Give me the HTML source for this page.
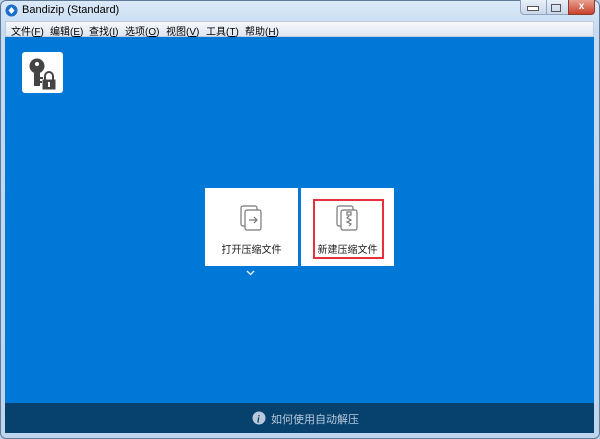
<!DOCTYPE html><html><head><style>
body{margin:0;width:600px;height:439px;background:#bcd4ee;font-family:"Liberation Sans","Noto Sans CJK SC",sans-serif;position:relative;overflow:hidden}
.frame{position:absolute;left:0;top:0;width:598px;height:437px;border:1px solid #5f7a96;border-radius:6px;background:linear-gradient(#dbe9f8,#c6dbf2 30px,#bfd5ee)}
.title{position:absolute;left:22px;top:4px;font-size:11px;color:#000}
.menu{position:absolute;left:5px;top:21px;width:589px;height:16px;background:linear-gradient(#f6f8fc,#dfe6f1);font-size:10px;border:1px solid #c0cbdb;box-sizing:border-box}
.menu span{position:absolute;top:1px}
.main{position:absolute;left:5px;top:37px;width:589px;height:366px;background:#0078d7}
.foot{position:absolute;left:5px;top:403px;width:589px;height:30px;background:#07426f;color:#b9c9db;font-size:11px}
.card{position:absolute;top:188px;width:93px;height:78px;background:#fff;font-size:10px;color:#222;text-align:center}
</style></head><body>
<div class="frame"></div>
<svg style="position:absolute;left:5px;top:4px" width="13" height="13"><circle cx="6.5" cy="6.5" r="6" fill="#1a6fc9"/><path d="M6.5 3 L9.5 6.5 L6.5 10 L3.5 6.5Z" fill="#fff"/></svg>
<div class="title">Bandizip (Standard)</div>
<div style="position:absolute;left:520px;top:0;width:25px;height:14px;border:1px solid #8fa3bb;border-top:0;border-radius:0 0 0 4px;background:linear-gradient(#e8f0fa,#c8d7ea)"></div>
<div style="position:absolute;left:546px;top:0;width:21px;height:14px;border:1px solid #8fa3bb;border-top:0;background:linear-gradient(#e8f0fa,#c8d7ea)"></div>
<div style="position:absolute;left:568px;top:0;width:25px;height:14px;border:1px solid #8a3a2e;border-top:0;border-radius:0 0 4px 0;background:linear-gradient(#e8a08e,#c8422e);color:#fff;font-size:10px;text-align:center;line-height:13px;font-weight:bold">x</div>
<div style="position:absolute;left:527px;top:6px;width:10px;height:3px;border:1px solid #555;background:#fff"></div>
<div style="position:absolute;left:551px;top:4px;width:8px;height:6px;border:1px solid #555"></div>
<div class="menu"><span style="left:5px">文件(<u>F</u>)</span><span style="left:44px">编辑(<u>E</u>)</span><span style="left:83px">查找(<u>I</u>)</span><span style="left:119px">选项(<u>O</u>)</span><span style="left:160px">视图(<u>V</u>)</span><span style="left:200px">工具(<u>T</u>)</span><span style="left:239px">帮助(<u>H</u>)</span></div>
<div class="main"></div>
<div style="position:absolute;left:22px;top:52px;width:41px;height:41px;background:#fff;border-radius:3px"></div>
<svg style="position:absolute;left:22px;top:52px" width="41" height="41"><circle cx="15" cy="14" r="7.5" fill="#444"/><circle cx="15" cy="12" r="2" fill="#fff"/><rect x="12" y="19" width="6" height="15" fill="#444"/><rect x="18" y="25" width="3" height="2" fill="#444"/><rect x="18" y="29" width="2" height="2" fill="#444"/><path d="M23 28v-4a4 4 0 0 1 8 0v4" stroke="#444" stroke-width="2" fill="none"/><rect x="20.5" y="27.5" width="13" height="10" fill="#444"/><rect x="26" y="30" width="2" height="5" fill="#fff"/></svg>
<div class="card" style="left:205px"><svg style="position:absolute;left:35px;top:17px" width="24" height="28" fill="none" stroke="#777" stroke-width="1.2"><rect x="1" y="1" width="16" height="20" rx="2"/><rect x="5" y="5" width="16" height="20" rx="2" fill="#fff"/><path d="M9 15h8M14 12l3 3-3 3"/></svg><div style="position:absolute;top:53px;width:100%">打开压缩文件</div></div>
<div class="card" style="left:301px"><div style="position:absolute;left:12px;top:11px;width:71px;height:60px;border:1px solid #e8303c;box-shadow:inset 0 0 0 1px #e8303c;box-sizing:border-box"></div><svg style="position:absolute;left:35px;top:17px" width="24" height="28" fill="none" stroke="#777" stroke-width="1.2"><rect x="1" y="1" width="16" height="20" rx="2"/><rect x="5" y="5" width="16" height="20" rx="2" fill="#fff"/><rect x="11" y="7" width="4" height="3"/><path d="M13 11l-2 2 4 2-4 2 4 2-2 2"/></svg><div style="position:absolute;top:53px;width:100%">新建压缩文件</div></div>
<svg style="position:absolute;left:246px;top:270px" width="9" height="6"><path d="M1 1l3.5 3.5L8 1" stroke="#fff" stroke-width="1.3" fill="none"/></svg>
<div class="foot"><svg style="position:absolute;left:247px;top:8px" width="14" height="14"><circle cx="7" cy="7" r="6.5" fill="#b9c9db"/><text x="5" y="11.5" font-size="10" font-style="italic" font-weight="bold" fill="#07426f" font-family="Liberation Serif">i</text></svg><span style="position:absolute;left:266px;top:8px">如何使用自动解压</span></div>
</body></html>
